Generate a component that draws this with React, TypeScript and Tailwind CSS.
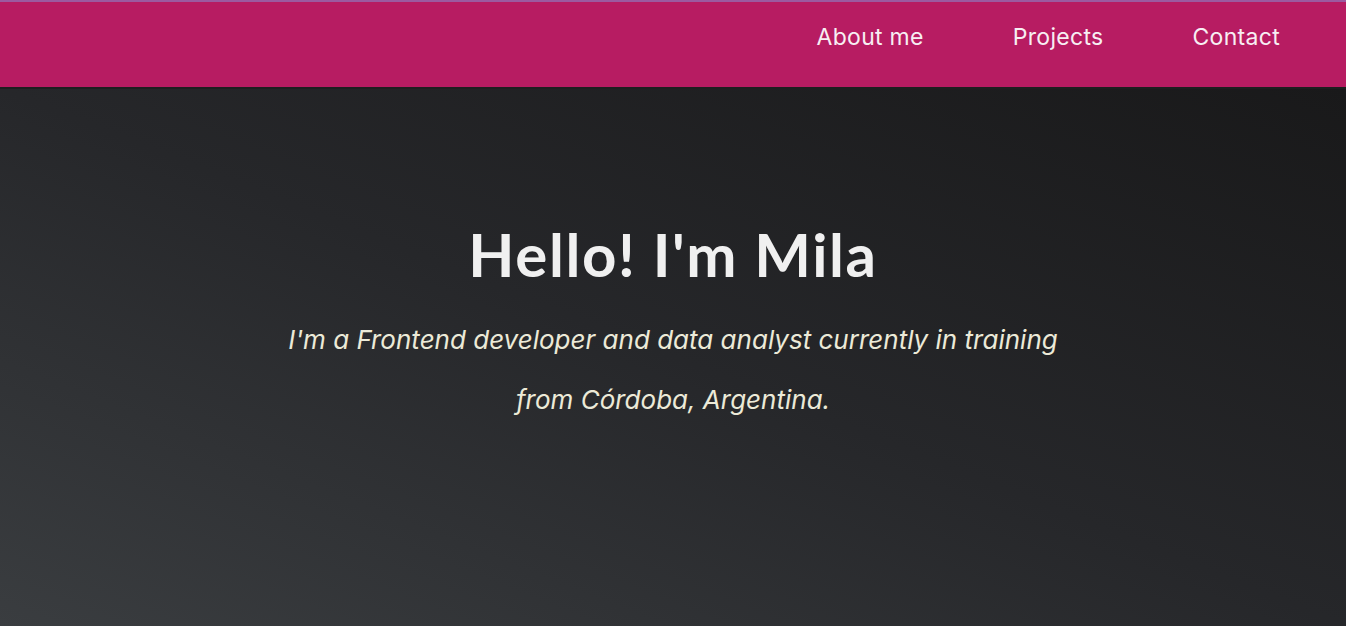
export default function App() {
  const links = ['About me', 'Projects', 'Contact']

  return (
    <div className="min-h-screen flex flex-col bg-[#1c1c1d]" style={{ fontFamily: 'Inter, "Open Sans", sans-serif' }}>
      {/* Nav */}
      <header className="h-[89px] bg-[#b71c62] border-t-2 border-t-[#9c5aa0] border-b-2 border-b-[#1e1e1f] flex items-center justify-end pr-[66px] pb-[14px]">
        <nav className="flex gap-[89px]">
          {links.map((l) => (
            <a key={l} href="#" className="text-[23px] tracking-[0.3px] text-[#f7eef3] font-normal">
              {l}
            </a>
          ))}
        </nav>
      </header>

      {/* Hero */}
      <main className="h-[537px] bg-gradient-to-tr from-[#3a3d40] via-[#26272a] to-[#19191a] flex flex-col items-center pt-[128px]">
        <h1 className="text-[60px] font-bold tracking-[1.6px] text-[#f0f0f0] leading-tight" style={{ fontFamily: 'Lato, sans-serif' }}>
          Hello! I'm Mila
        </h1>
        <p className="mt-[18px] text-[26px] italic text-[#ecead8] text-center leading-[60px]">
          I'm a Frontend developer and data analyst currently in training
          <br />
          from Córdoba, Argentina.
        </p>
      </main>
    </div>
  )
}
